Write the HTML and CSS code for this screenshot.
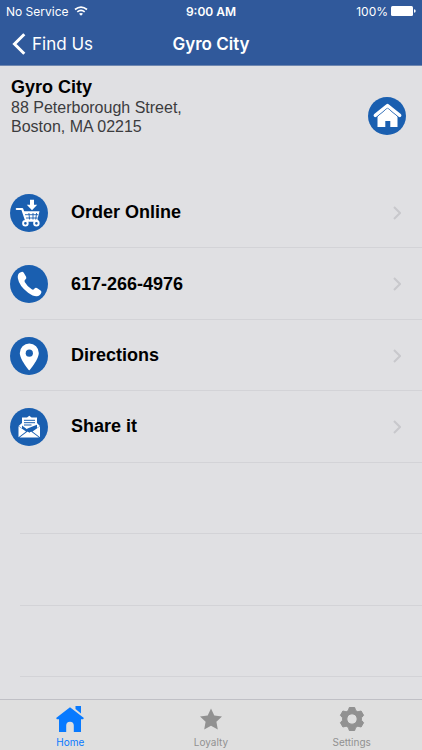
FILE: index.html
```html
<!DOCTYPE html>
<html lang="en">
<head>
<meta charset="utf-8">
<meta name="viewport" content="width=device-width, initial-scale=1">
<title>Gyro City</title>
<link rel="stylesheet" href="styles.css">
</head>
<body>
<header class="top">
  <div class="status">
    <div class="status-left">
      <span>No Service</span>
      <svg width="14" height="10" viewBox="0 0 14 10" fill="none" stroke="#fff" stroke-width="1.7" aria-hidden="true"><path d="M1 3.500Q7-1.300 13 3.500M3.300 5.900Q7 3 10.700 5.900"/><path d="M5 7.800Q7 6.300 9 7.800L7 9.800Z" fill="#fff" stroke="none"/></svg>
    </div>
    <div class="status-time">9:00 AM</div>
    <div class="status-right">
      <span>100%</span>
      <svg width="25" height="10" viewBox="0 0 25 10" fill="#fff" aria-hidden="true"><rect width="22" height="10" rx="1.500"/><path d="M23 3.200q1.700.3 1.700 1.800T23 6.800z"/></svg>
    </div>
  </div>
  <nav class="bar">
    <a class="back" href="#">
      <svg width="14" height="22" viewBox="0 0 14 22" fill="none" stroke="#fff" stroke-width="3" aria-hidden="true"><path d="M12.300 1.300 2.500 11l9.800 9.700"/></svg>
      <span>Find Us</span>
    </a>
    <h1>Gyro City</h1>
  </nav>
</header>

<main>
  <section class="place">
    <div>
      <h2>Gyro City</h2>
      <address>88 Peterborough Street,<br>Boston, MA 02215</address>
    </div>
    <button class="place-home" type="button" aria-label="Home location">
      <svg class="disc" viewBox="0 0 38 38" aria-hidden="true"><circle cx="19" cy="19" r="19" fill="#1a5fb0"/><path d="M9.500 19.500 19.500 11l10 8.500V30h-7.200v-6h-5v6H9.500z" fill="#fff"/><path d="m7.800 20.600 11.700-9.800 11.700 9.800" fill="none" stroke="#1a5fb0" stroke-width="1"/><path d="m7.300 18.400 12.200-9.900 12.200 9.900" fill="none" stroke="#fff" stroke-width="3.400" stroke-linecap="round" stroke-linejoin="round"/></svg>
    </button>
  </section>

  <ul class="list">
    <li><a href="#">
      <svg class="disc" viewBox="0 0 38 38" aria-hidden="true"><circle cx="19" cy="19" r="19" fill="#1a5fb0"/><path d="M20 5.800h4v5h3.200L22 16.200 16.800 10.800H20z" fill="#fff"/><path d="M6.800 15h5.400l4 11.700h11" fill="none" stroke="#fff" stroke-width="2.200" stroke-linecap="round" stroke-linejoin="round"/><path d="M13.300 17.300h16.200l-2.500 9.700H16z" fill="#fff"/><path d="M15 20.700h13.200M16 24h11.500M18.900 19l.7 6.500M23 19v6.500M26.600 19l-.9 6.500" stroke="#1a5fb0" stroke-width=".9"/><g fill="#1a5fb0" stroke="#fff" stroke-width="1.900"><circle cx="15.400" cy="29.300" r="2.300"/><circle cx="26.400" cy="29.300" r="2.300"/></g></svg>
      <span>Order Online</span>
      <svg class="chevron" viewBox="0 0 8 14" aria-hidden="true"><path d="m1 1 6 6-6 6"/></svg>
    </a></li>
    <li><a href="#">
      <svg class="disc" viewBox="0 0 38 38" aria-hidden="true"><circle cx="19" cy="19" r="19" fill="#1a5fb0"/><path d="M7.800 11Q8.200 7.500 11.600 6.900q1.500-.2 2.300 1.100l2.200 3.800q.7 1.500-.5 2.500-1.600 1.200-.9 2.700 2.600 4.600 7 7.300 1.500.9 2.600-.5 1.200-1.500 2.600-.7l3.700 2.300q1.200.9.700 2.300-1.300 3.300-4.600 3.600-3.400.2-8.600-3.500Q9.200 21.200 7.900 13.600q-.2-1.400-.1-2.600z" fill="#fff"/></svg>
      <span>617-266-4976</span>
      <svg class="chevron" viewBox="0 0 8 14" aria-hidden="true"><path d="m1 1 6 6-6 6"/></svg>
    </a></li>
    <li><a href="#">
      <svg class="disc" viewBox="0 0 38 38" aria-hidden="true"><circle cx="19" cy="19" r="19" fill="#1a5fb0"/><path d="M19.300 6.500a9.500 9.500 0 0 0-9.500 9.500c0 6.500 9.500 17.500 9.500 17.500s9.500-11 9.500-17.500a9.500 9.500 0 0 0-9.500-9.500z" fill="#fff"/><circle cx="19.300" cy="16.200" r="3.600" fill="#1a5fb0"/></svg>
      <span>Directions</span>
      <svg class="chevron" viewBox="0 0 8 14" aria-hidden="true"><path d="m1 1 6 6-6 6"/></svg>
    </a></li>
    <li><a href="#">
      <svg class="disc" viewBox="0 0 38 38" aria-hidden="true"><circle cx="19" cy="19" r="19" fill="#1a5fb0"/><path d="M12 9.500h5l2.300-1.700 2.300 1.700H27v8L19.300 23 12 17.500z" fill="#fff"/><path d="M14 12.300h11M14 14.700h11M14 17h7.500" stroke="#1a5fb0" stroke-width="1"/><path d="M8.500 18.300v11L16 23.600zM30 18.300v11l-7.500-5.700zM9.600 29.600l8-6.200 1.700 1.100 1.700-1.100 8 6.200z" fill="#fff"/><path d="m8.600 18 3.400-3v5.300zM29.900 18 27 15v5z" fill="#fff"/><path d="m17.500 20.500 5-2 4.500-1.700v2.600l-7.700 5.200-3.300-2.300z" fill="#1a5fb0"/></svg>
      <span>Share it</span>
      <svg class="chevron" viewBox="0 0 8 14" aria-hidden="true"><path d="m1 1 6 6-6 6"/></svg>
    </a></li>
    <li></li>
    <li></li>
    <li></li>
  </ul>
</main>

<nav class="tabs">
  <a class="active" href="#">
    <svg width="28" height="28" viewBox="0 0 28 28" fill="currentColor" aria-hidden="true"><path d="M19.500 1H25v7.500l-5.500-4.600z"/><path d="M14 2.300 27.900 13l-.8 1.300H25V27h-7.200v-6.500a3.800 3.800 0 0 0-7.600 0V27H3V14.300H.9L.1 13z"/></svg>
    <span>Home</span>
  </a>
  <a href="#">
    <svg width="28" height="28" viewBox="0 0 28 28" fill="currentColor" aria-hidden="true"><path d="m14 3.500 3.300 7 7.700 1-5.600 5.300 1.400 7.700-6.800-3.700-6.800 3.700 1.400-7.700L3 11.500l7.700-1z"/></svg>
    <span>Loyalty</span>
  </a>
  <a href="#">
    <svg width="28" height="28" viewBox="0 0 28 28" fill="currentColor" aria-hidden="true"><path fill-rule="evenodd" stroke="currentColor" stroke-linejoin="round" d="M11.300 2.500h5.400l.9 3 2.200 1.300 3.300-.8 2.500 4.300-2.200 2.500v2.400l2.200 2.500-2.500 4.300-3.300-.8-2.200 1.300-.9 3h-5.400l-.9-3-2.200-1.300-3.300.8-2.500-4.300 2.200-2.500v-2.400l-2.200-2.500L4.900 6l3.300.8 2.200-1.300zM14 8.800a5.200 5.200 0 1 0 0 10.400 5.200 5.200 0 0 0 0-10.400z"/></svg>
    <span>Settings</span>
  </a>
</nav>
</body>
</html>
```
FILE: styles.css
```css
* {
  box-sizing: border-box;
}

body {
  margin: 0;
  min-height: 100vh;
  display: flex;
  flex-direction: column;
  background: #e0e0e3;
  color: #000;
  font-family: "Liberation Sans", Arial, sans-serif;
}

a {
  color: inherit;
  text-decoration: none;
}

svg {
  display: block;
  flex: none;
}

h1,
h2 {
  margin: 0;
}

.top {
  background: #30599b;
  border-bottom: 1px solid #6f87b0;
  color: #fff;
  font-family: Inter, sans-serif;
}

.status,
.bar {
  display: grid;
  grid-template-columns: 1fr auto 1fr;
  align-items: center;
}

.status {
  height: 22px;
  padding: 0 6px;
  font-size: 12px;
}

.status-left,
.status-right {
  display: flex;
  align-items: center;
  gap: 5px;
}

.status-right {
  justify-content: flex-end;
  gap: 3px;
}

.status-time {
  font-weight: 600;
}

.bar {
  height: 43px;
  padding: 0 12px;
}

.back {
  display: flex;
  align-items: center;
  gap: 6px;
  font-size: 17px;
}

.bar h1 {
  font-size: 17px;
  font-weight: 600;
}

main {
  flex: 1;
  display: flex;
  flex-direction: column;
  padding-bottom: 22px;
}

.place {
  min-height: 111px;
  display: flex;
  justify-content: space-between;
  align-items: flex-start;
  padding: 10px 16px 0 11px;
}

.place h2 {
  font-size: 18px;
  line-height: 22px;
}

.place address {
  font-size: 16px;
  line-height: 19px;
  font-style: normal;
  color: #3c3c3e;
}

.place-home {
  margin-top: 21px;
  padding: 0;
  border: 0;
  background: none;
}

.disc {
  width: 38px;
  height: 38px;
}

.list {
  flex: 1;
  display: grid;
  grid-auto-rows: 1fr;
  margin: 0;
  padding: 0;
  list-style: none;
}

.list li {
  display: grid;
  min-height: 56px;
  background: linear-gradient(#d3d3d7, #d3d3d7) 20px 100% / 100% 1px no-repeat;
}

.list a {
  display: flex;
  align-items: center;
  gap: 23px;
  padding: 0 21px 0 10px;
  font-size: 18px;
  font-weight: bold;
}

.list span {
  flex: 1;
}

.chevron {
  width: 8px;
  height: 14px;
  fill: none;
  stroke: #c8c8cc;
  stroke-width: 2;
}

.tabs {
  height: 51px;
  display: grid;
  grid-template-columns: repeat(3, 1fr);
  border-top: 1px solid #c0c0c6;
  background: #dfdfdf;
  color: #919191;
  font-family: Inter, sans-serif;
  font-size: 10px;
  line-height: 12px;
}

.tabs a {
  display: flex;
  flex-direction: column;
  align-items: center;
  gap: 3px;
  padding-top: 5px;
}

.tabs .active {
  color: #087aff;
}
```
